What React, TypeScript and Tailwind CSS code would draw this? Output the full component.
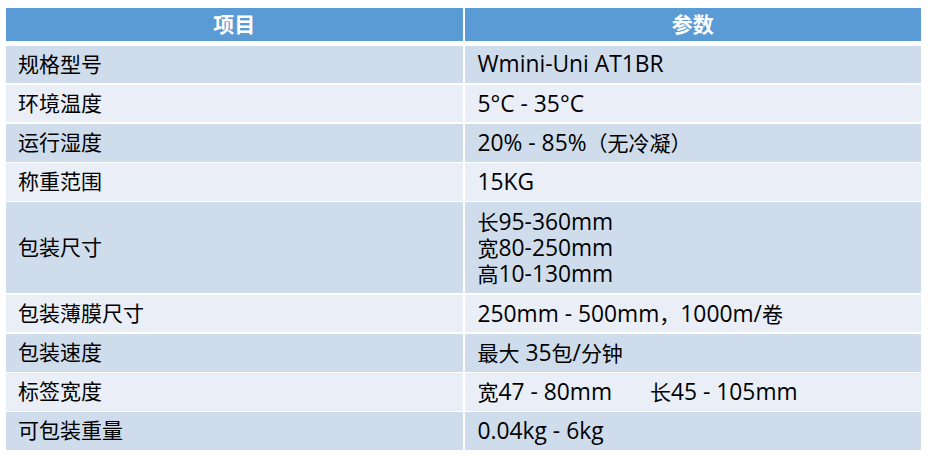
const font = '[font-family:"Open_Sans","Noto_Sans_CJK_SC",sans-serif]'

interface Spec {
  name: string
  value: string[]
  tall?: boolean
}

const specs: Spec[] = [
  { name: '规格型号', value: ['Wmini-Uni AT1BR'] },
  { name: '环境温度', value: ['5°C - 35°C'] },
  { name: '运行湿度', value: ['20% - 85%（无冷凝）'] },
  { name: '称重范围', value: ['15KG'] },
  { name: '包装尺寸', value: ['长95-360mm', '宽80-250mm', '高10-130mm'], tall: true },
  { name: '包装薄膜尺寸', value: ['250mm - 500mm，1000m/卷'] },
  { name: '包装速度', value: ['最大 35包/分钟'] },
  { name: '标签宽度', value: [] },
  { name: '可包装重量', value: ['0.04kg - 6kg'] },
]

// latin runs render a bit larger than the CJK ones, like YaHei does
function Mixed({ text }: { text: string }) {
  const parts = text.split(/([\u3000-\u9fff\uff00-\uffef]+)/).filter(Boolean)
  return (
    <>
      {parts.map((p, i) =>
        /[\u3000-\u9fff\uff00-\uffef]/.test(p) ? (
          <span key={i} className="inline-block leading-[26px] whitespace-pre">{p}</span>
        ) : (
          <span key={i} className="inline-block leading-[26px] whitespace-pre text-[22.8px]">{p}</span>
        )
      )}
    </>
  )
}

export default function App() {
  return (
    <div className={`w-[930px] h-[465px] bg-white pt-[8px] pl-[6px] text-[21px] text-black ${font}`}>
      <div className="w-[915px]">
        <div className="grid grid-cols-2 gap-x-[2px] h-[33px] bg-white">
          <div className="bg-[#5b9bd5] flex items-center justify-center text-white font-bold">项目</div>
          <div className="bg-[#5b9bd5] flex items-center justify-center text-white font-bold">参数</div>
        </div>
        <div className="mt-[4.7px] flex flex-col gap-[1.6px]">
          {specs.map((s, i) => {
            const bg = i % 2 === 0 ? 'bg-[#cfdcec]' : 'bg-[#e9eef7]'
            return (
              <div
                key={s.name}
                className={`grid grid-cols-2 gap-x-[2px] ${s.tall ? 'h-[90.7px]' : 'h-[37.6px]'}`}
              >
                <div className={`${bg} flex items-center pl-[12px]`}>{s.name}</div>
                <div className={`${bg} flex flex-col justify-center pl-[13px] leading-[26px]`}>
                  {s.name === '标签宽度' ? (
                    <div className="flex">
                      <span><Mixed text="宽47 - 80mm" /></span>
                      <span className="ml-[38px]"><Mixed text="长45 - 105mm" /></span>
                    </div>
                  ) : (
                    s.value.map((v) => (
                      <div key={v} className="h-[26px]">
                        <Mixed text={v} />
                      </div>
                    ))
                  )}
                </div>
              </div>
            )
          })}
        </div>
      </div>
    </div>
  )
}
